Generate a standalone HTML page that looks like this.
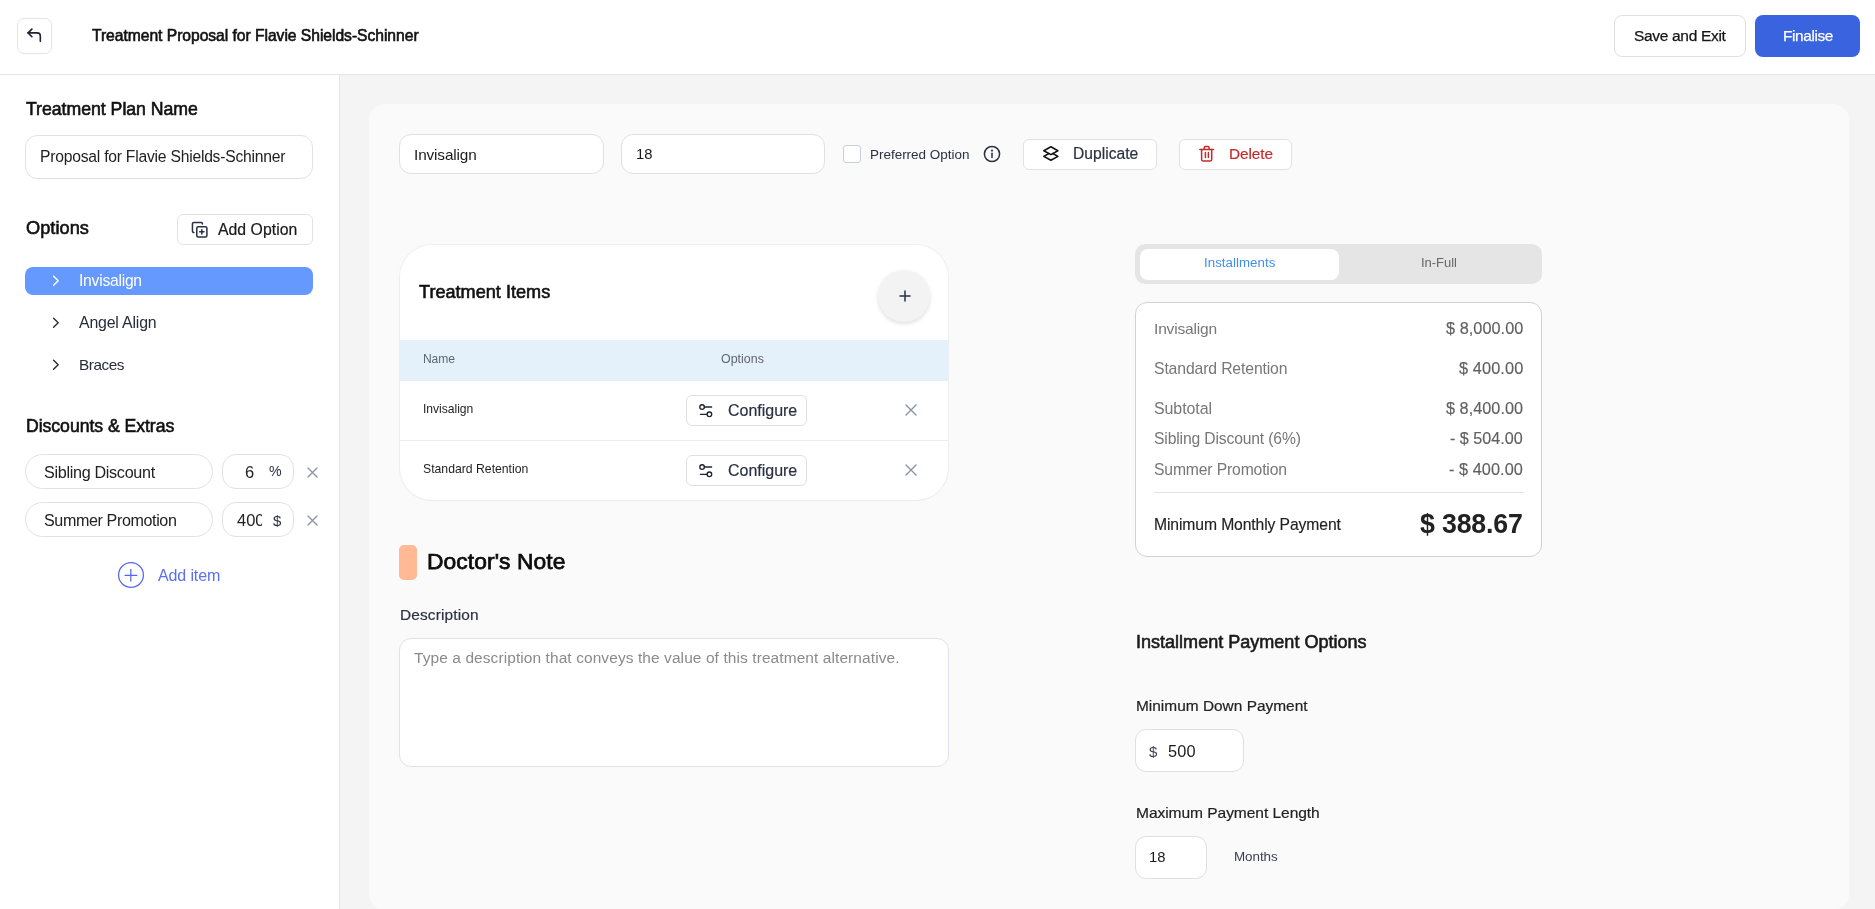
<!DOCTYPE html>
<html><head><meta charset="utf-8"><title>Treatment Proposal</title>
<style>
html,body{margin:0;padding:0;width:1875px;height:909px;overflow:hidden;background:#f4f4f4;}
body{position:relative;font-family:"Liberation Sans",sans-serif;}
.t{position:absolute;white-space:nowrap;will-change:transform;}
</style></head><body>
<div style="position:absolute;left:0px;top:0px;width:1875px;height:75px;box-sizing:border-box;background:#fff;border-bottom:1px solid #e5e5e5;"></div>
<div style="position:absolute;left:17px;top:18px;width:35px;height:36px;box-sizing:border-box;border:1px solid #e3e3e3;border-radius:7px;background:#fff;"></div>
<svg style="position:absolute;left:24.6px;top:26.4px" width="18.4" height="18.4" viewBox="0 0 24 24" fill="none" stroke="#1e2433" stroke-width="2.1" stroke-linecap="round" stroke-linejoin="round"><path d="M9 14 4 9l5-5"/><path d="M20 20v-7a4 4 0 0 0-4-4H4"/></svg>
<div class="t" style="left:91.70px;top:27.85px;font-size:15.66px;line-height:15.66px;letter-spacing:-0.039px;font-weight:normal;color:#111;-webkit-text-stroke:0.60px #111;">Treatment Proposal for Flavie Shields-Schinner</div>
<div style="position:absolute;left:1614px;top:15px;width:132px;height:42px;box-sizing:border-box;border:1px solid #e0e0e0;border-radius:8px;background:#fff;"></div>
<div class="t" style="left:1634.00px;top:28.08px;font-size:15.50px;line-height:15.50px;letter-spacing:-0.318px;font-weight:normal;color:#151515;-webkit-text-stroke:0.25px #151515;">Save and Exit</div>
<div style="position:absolute;left:1755px;top:15px;width:105px;height:42px;box-sizing:border-box;border-radius:8px;background:#3a63e0;"></div>
<div class="t" style="left:1782.60px;top:28.21px;font-size:15.35px;line-height:15.35px;letter-spacing:-0.354px;font-weight:normal;color:#fff;-webkit-text-stroke:0.25px #fff;">Finalise</div>
<div style="position:absolute;left:0px;top:75px;width:340px;height:834px;box-sizing:border-box;background:#fff;border-right:1px solid #e5e5e5;"></div>
<div class="t" style="left:25.80px;top:101.12px;font-size:17.70px;line-height:17.70px;letter-spacing:-0.025px;font-weight:normal;color:#111;-webkit-text-stroke:0.60px #111;">Treatment Plan Name</div>
<div style="position:absolute;left:25px;top:135px;width:288px;height:44px;box-sizing:border-box;border:1px solid #e2e2e2;border-radius:12px;background:#fff;"></div>
<div class="t" style="left:40.20px;top:149.03px;font-size:15.68px;line-height:15.68px;letter-spacing:-0.229px;font-weight:normal;color:#222;">Proposal for Flavie Shields-Schinner</div>
<div class="t" style="left:25.80px;top:218.89px;font-size:18.20px;line-height:18.20px;letter-spacing:0.046px;font-weight:normal;color:#111;-webkit-text-stroke:0.60px #111;">Options</div>
<div style="position:absolute;left:177px;top:214px;width:136px;height:31px;box-sizing:border-box;border:1px solid #e2e2e2;border-radius:6px;background:#fff;"></div>
<svg style="position:absolute;left:191px;top:221px" width="17.35" height="17.35" viewBox="0 0 24 24" fill="none" stroke="#2a3142" stroke-width="2.1" stroke-linecap="round" stroke-linejoin="round"><line x1="15" x2="15" y1="12" y2="18"/><line x1="12" x2="18" y1="15" y2="15"/><rect width="14" height="14" x="8" y="8" rx="2" ry="2"/><path d="M4 16c-1.1 0-2-.9-2-2V4c0-1.1.9-2 2-2h10c1.1 0 2 .9 2 2"/></svg>
<div class="t" style="left:218.40px;top:221.83px;font-size:15.79px;line-height:15.79px;letter-spacing:0.034px;font-weight:normal;color:#1a1a1a;-webkit-text-stroke:0.20px #1a1a1a;">Add Option</div>
<div style="position:absolute;left:25px;top:267px;width:288px;height:28px;box-sizing:border-box;background:#6699fe;border-radius:8px;"></div>
<svg style="position:absolute;left:49px;top:274px" width="14" height="14" viewBox="0 0 14 14" fill="none" stroke="#fff" stroke-width="1.4" stroke-linecap="round" stroke-linejoin="round"><path d="M4.6 2.3 9.2 6.8 4.6 11.3"/></svg>
<div class="t" style="left:78.70px;top:272.85px;font-size:15.65px;line-height:15.65px;letter-spacing:-0.239px;font-weight:normal;color:#fff;">Invisalign</div>
<svg style="position:absolute;left:49px;top:316px" width="14" height="14" viewBox="0 0 14 14" fill="none" stroke="#272c3b" stroke-width="1.4" stroke-linecap="round" stroke-linejoin="round"><path d="M4.6 2.3 9.2 6.8 4.6 11.3"/></svg>
<div class="t" style="left:78.70px;top:314.55px;font-size:15.89px;line-height:15.89px;letter-spacing:-0.180px;font-weight:normal;color:#272c3b;">Angel Align</div>
<svg style="position:absolute;left:49px;top:358px" width="14" height="14" viewBox="0 0 14 14" fill="none" stroke="#272c3b" stroke-width="1.4" stroke-linecap="round" stroke-linejoin="round"><path d="M4.6 2.3 9.2 6.8 4.6 11.3"/></svg>
<div class="t" style="left:78.70px;top:356.93px;font-size:15.32px;line-height:15.32px;letter-spacing:-0.457px;font-weight:normal;color:#272c3b;">Braces</div>
<div class="t" style="left:26.20px;top:417.56px;font-size:17.65px;line-height:17.65px;letter-spacing:-0.046px;font-weight:normal;color:#111;-webkit-text-stroke:0.60px #111;">Discounts & Extras</div>
<div style="position:absolute;left:25px;top:454px;width:188px;height:35px;box-sizing:border-box;border:1px solid #e2e2e2;border-radius:18px;background:#fff;"></div>
<div style="position:absolute;left:222px;top:454px;width:72px;height:35px;box-sizing:border-box;border:1px solid #e2e2e2;border-radius:14px;background:#fff;"></div>
<div class="t" style="left:44.40px;top:464.32px;font-size:16.17px;line-height:16.17px;letter-spacing:-0.314px;font-weight:normal;color:#222;">Sibling Discount</div>
<div style="position:absolute;left:232px;top:455px;width:29.5px;height:33px;overflow:hidden">
<div class="t" style="left:13.00px;top:9.03px;font-size:16.50px;line-height:16.50px;letter-spacing:0.000px;font-weight:normal;color:#222;">6</div>
</div>
<div class="t" style="left:268.90px;top:464.48px;font-size:14.20px;line-height:14.20px;letter-spacing:0.000px;font-weight:normal;color:#2a3142;">%</div>
<svg style="position:absolute;left:305.5px;top:465.7px" width="13" height="13" viewBox="0 0 13 13" fill="none" stroke="#8a93a3" stroke-width="1.25" stroke-linecap="round"><path d="M2 2 11 11M11 2 2 11"/></svg>
<div style="position:absolute;left:25px;top:502px;width:188px;height:35px;box-sizing:border-box;border:1px solid #e2e2e2;border-radius:18px;background:#fff;"></div>
<div style="position:absolute;left:222px;top:502px;width:72px;height:35px;box-sizing:border-box;border:1px solid #e2e2e2;border-radius:14px;background:#fff;"></div>
<div class="t" style="left:44.40px;top:512.35px;font-size:16.12px;line-height:16.12px;letter-spacing:-0.393px;font-weight:normal;color:#222;">Summer Promotion</div>
<div style="position:absolute;left:232px;top:503px;width:29.5px;height:33px;overflow:hidden">
<div class="t" style="left:4.70px;top:9.03px;font-size:16.50px;line-height:16.50px;letter-spacing:0.000px;font-weight:normal;color:#222;">400</div>
</div>
<div class="t" style="left:272.50px;top:512.80px;font-size:15.00px;line-height:15.00px;letter-spacing:0.000px;font-weight:normal;color:#2a3142;">$</div>
<svg style="position:absolute;left:305.5px;top:513.7px" width="13" height="13" viewBox="0 0 13 13" fill="none" stroke="#8a93a3" stroke-width="1.25" stroke-linecap="round"><path d="M2 2 11 11M11 2 2 11"/></svg>
<svg style="position:absolute;left:117px;top:560.5px" width="28" height="28" viewBox="0 0 28 28" fill="none" stroke="#5566f0" stroke-width="1.25" stroke-linecap="round"><circle cx="14" cy="14" r="12.4"/><path d="M13.8 8.3v11.8M8 14.3h11.8"/></svg>
<div class="t" style="left:157.70px;top:566.92px;font-size:16.04px;line-height:16.04px;letter-spacing:-0.143px;font-weight:normal;color:#5b6ef5;">Add item</div>
<div style="position:absolute;left:340px;top:75px;width:1535px;height:834px;box-sizing:border-box;background:#f4f4f4;"></div>
<div style="position:absolute;left:369px;top:104px;width:1480px;height:806px;box-sizing:border-box;background:#fafafa;border-radius:16px;"></div>
<div style="position:absolute;left:399px;top:134px;width:205px;height:40px;box-sizing:border-box;border:1px solid #e0e0e0;border-radius:12px;background:#fff;"></div>
<div class="t" style="left:414.30px;top:147.03px;font-size:15.32px;line-height:15.32px;letter-spacing:-0.117px;font-weight:normal;color:#1a1a1a;">Invisalign</div>
<div style="position:absolute;left:621px;top:134px;width:204px;height:40px;box-sizing:border-box;border:1px solid #e0e0e0;border-radius:12px;background:#fff;"></div>
<div class="t" style="left:635.60px;top:147.47px;font-size:14.80px;line-height:14.80px;letter-spacing:0.000px;font-weight:normal;color:#1a1a1a;">18</div>
<div style="position:absolute;left:843px;top:145px;width:18px;height:18px;box-sizing:border-box;border:1px solid #c9ced9;border-radius:3px;background:#fff;"></div>
<div class="t" style="left:870.40px;top:147.59px;font-size:13.48px;line-height:13.48px;letter-spacing:-0.012px;font-weight:normal;color:#2a3142;">Preferred Option</div>
<svg style="position:absolute;left:982.8px;top:144.7px" width="18" height="18" viewBox="0 0 18 18" fill="none" stroke="#2a3142" stroke-width="1.5" stroke-linecap="round"><circle cx="9" cy="9" r="7.6"/><path d="M9 8.2v4.2"/><circle cx="9" cy="5.6" r="0.4" fill="#2a3142"/></svg>
<div style="position:absolute;left:1023px;top:139px;width:134px;height:31px;box-sizing:border-box;border:1px solid #e2e2e2;border-radius:6px;background:#fff;"></div>
<svg style="position:absolute;left:1038px;top:141px" width="26" height="26" viewBox="0 0 26 26" fill="none" stroke="#111" stroke-width="1.55" stroke-linecap="round" stroke-linejoin="round"><path d="M12.9 5.8 19.9 9.7 12.9 13.6 5.8 9.7z"/><path d="M11 12.55 5.8 15.4 12.9 19.3 19.9 15.4 14.8 12.55"/></svg>
<div class="t" style="left:1072.80px;top:145.68px;font-size:15.62px;line-height:15.62px;letter-spacing:0.023px;font-weight:normal;color:#2a3142;-webkit-text-stroke:0.20px #2a3142;">Duplicate</div>
<div style="position:absolute;left:1179px;top:139px;width:113px;height:31px;box-sizing:border-box;border:1px solid #e2e2e2;border-radius:6px;background:#fff;"></div>
<svg style="position:absolute;left:1193px;top:141px" width="26" height="26" viewBox="0 0 26 26" fill="none" stroke="#c42b2b" stroke-width="1.5" stroke-linecap="round" stroke-linejoin="round"><path d="M6.8 8.4H20.5"/><path d="M8.6 8.4V18.6Q8.6 20 10 20H17.3Q18.7 20 18.7 18.6V8.4"/><path d="M10.9 8.4 11.5 5.9Q11.8 5.4 12.3 5.4H15Q15.5 5.4 15.8 5.9L16.4 8.4"/><path d="M12.4 11.6V16.6M15.4 11.6V16.6"/></svg>
<div class="t" style="left:1229.30px;top:145.89px;font-size:15.37px;line-height:15.37px;letter-spacing:-0.069px;font-weight:normal;color:#c42b2b;-webkit-text-stroke:0.20px #c42b2b;">Delete</div>
<div style="position:absolute;left:400px;top:245px;width:548px;height:255px;box-sizing:border-box;background:#fff;border-radius:32px;box-shadow:0 0 0 1px rgba(228,231,236,0.6),0 1px 2px rgba(0,0,0,0.03);overflow:hidden;"></div>
<div class="t" style="left:418.60px;top:282.81px;font-size:18.07px;line-height:18.07px;letter-spacing:0.024px;font-weight:normal;color:#111;-webkit-text-stroke:0.60px #111;">Treatment Items</div>
<div style="position:absolute;left:878.4px;top:270px;width:52.0px;height:52px;box-sizing:border-box;background:#f3f3f3;border-radius:50%;box-shadow:0 2px 4px rgba(0,0,0,0.12);"></div>
<svg style="position:absolute;left:896.85px;top:287.9px" width="16" height="16" viewBox="0 0 16 16" fill="none" stroke="#2a3142" stroke-width="1.5" stroke-linecap="round"><path d="M8 3v10M3 8h10"/></svg>
<div style="position:absolute;left:400px;top:340px;width:548px;height:41px;box-sizing:border-box;background:#e4f1fb;"></div>
<div class="t" style="left:422.90px;top:352.54px;font-size:12.12px;line-height:12.12px;letter-spacing:-0.142px;font-weight:normal;color:#5f6673;">Name</div>
<div class="t" style="left:721.30px;top:352.59px;font-size:12.41px;line-height:12.41px;letter-spacing:0.022px;font-weight:normal;color:#5f6673;">Options</div>
<div style="position:absolute;left:400px;top:440px;width:548px;height:1px;box-sizing:border-box;background:#ececec;"></div>
<div class="t" style="left:422.80px;top:402.54px;font-size:12.12px;line-height:12.12px;letter-spacing:-0.027px;font-weight:normal;color:#1e1e1e;">Invisalign</div>
<div style="position:absolute;left:686px;top:395px;width:121px;height:31px;box-sizing:border-box;border:1px solid #e0e0e0;border-radius:6px;background:#fff;"></div>
<svg style="position:absolute;left:692px;top:398px" width="28" height="26" viewBox="0 0 28 26" fill="none" stroke="#1e2433" stroke-width="1.35" stroke-linecap="round"><path d="M12.4 9H19.6M8.4 16.3H15.1"/><circle cx="10.1" cy="9" r="2.3"/><circle cx="17.4" cy="16.3" r="2.3"/></svg>
<div class="t" style="left:727.60px;top:402.67px;font-size:15.98px;line-height:15.98px;letter-spacing:-0.001px;font-weight:normal;color:#2a3142;-webkit-text-stroke:0.20px #2a3142;">Configure</div>
<svg style="position:absolute;left:904.7px;top:404.2px" width="12" height="12" viewBox="0 0 12 12" fill="none" stroke="#8a93a3" stroke-width="1.4" stroke-linecap="round"><path d="M1 1 11 11M11 1 1 11"/></svg>
<div class="t" style="left:422.80px;top:462.56px;font-size:12.22px;line-height:12.22px;letter-spacing:0.002px;font-weight:normal;color:#1e1e1e;">Standard Retention</div>
<div style="position:absolute;left:686px;top:455px;width:121px;height:31px;box-sizing:border-box;border:1px solid #e0e0e0;border-radius:6px;background:#fff;"></div>
<svg style="position:absolute;left:692px;top:458px" width="28" height="26" viewBox="0 0 28 26" fill="none" stroke="#1e2433" stroke-width="1.35" stroke-linecap="round"><path d="M12.4 9H19.6M8.4 16.3H15.1"/><circle cx="10.1" cy="9" r="2.3"/><circle cx="17.4" cy="16.3" r="2.3"/></svg>
<div class="t" style="left:727.60px;top:462.67px;font-size:15.98px;line-height:15.98px;letter-spacing:-0.001px;font-weight:normal;color:#2a3142;-webkit-text-stroke:0.20px #2a3142;">Configure</div>
<svg style="position:absolute;left:904.7px;top:464.2px" width="12" height="12" viewBox="0 0 12 12" fill="none" stroke="#8a93a3" stroke-width="1.4" stroke-linecap="round"><path d="M1 1 11 11M11 1 1 11"/></svg>
<div style="position:absolute;left:399px;top:545px;width:18px;height:35px;box-sizing:border-box;background:#ffb994;border-radius:5px;"></div>
<div class="t" style="left:426.70px;top:550.48px;font-size:22.82px;line-height:22.82px;letter-spacing:0.073px;font-weight:normal;color:#0d0d0d;-webkit-text-stroke:0.75px #0d0d0d;">Doctor's Note</div>
<div class="t" style="left:400.40px;top:606.95px;font-size:15.42px;line-height:15.42px;letter-spacing:0.149px;font-weight:normal;color:#2a3142;-webkit-text-stroke:0.20px #2a3142;">Description</div>
<div style="position:absolute;left:399px;top:638px;width:550px;height:129px;box-sizing:border-box;border:1px solid #dfe2ea;border-radius:12px;background:#fff;"></div>
<div class="t" style="left:413.90px;top:649.62px;font-size:15.46px;line-height:15.46px;letter-spacing:0.099px;font-weight:normal;color:#8a8a8a;">Type a description that conveys the value of this treatment alternative.</div>
<div style="position:absolute;left:1135px;top:244px;width:407px;height:40px;box-sizing:border-box;background:#e5e5e5;border-radius:10px;"></div>
<div style="position:absolute;left:1140px;top:249px;width:199px;height:31px;box-sizing:border-box;background:#fff;border-radius:8px;"></div>
<div class="t" style="left:1203.70px;top:255.78px;font-size:13.25px;line-height:13.25px;letter-spacing:0.055px;font-weight:normal;color:#3d8ef0;">Installments</div>
<div class="t" style="left:1420.50px;top:256.01px;font-size:12.99px;line-height:12.99px;letter-spacing:-0.029px;font-weight:normal;color:#666;">In-Full</div>
<div style="position:absolute;left:1135px;top:302px;width:407px;height:255px;box-sizing:border-box;border:1px solid #d2d2d2;border-radius:12px;background:#fff;"></div>
<div class="t" style="left:1154.30px;top:320.83px;font-size:15.56px;line-height:15.56px;letter-spacing:-0.176px;font-weight:normal;color:#777;">Invisalign</div>
<div class="t" style="left:1445.60px;top:320.23px;font-size:16.27px;line-height:16.27px;letter-spacing:0.046px;font-weight:normal;color:#606060;-webkit-text-stroke:0.15px #606060;">$ 8,000.00</div>
<div class="t" style="left:1154.30px;top:360.87px;font-size:15.75px;line-height:15.75px;letter-spacing:-0.130px;font-weight:normal;color:#777;">Standard Retention</div>
<div class="t" style="left:1458.60px;top:360.35px;font-size:16.36px;line-height:16.36px;letter-spacing:0.085px;font-weight:normal;color:#606060;-webkit-text-stroke:0.15px #606060;">$ 400.00</div>
<div class="t" style="left:1154.30px;top:400.61px;font-size:15.94px;line-height:15.94px;letter-spacing:-0.068px;font-weight:normal;color:#777;">Subtotal</div>
<div class="t" style="left:1445.80px;top:400.35px;font-size:16.24px;line-height:16.24px;letter-spacing:0.037px;font-weight:normal;color:#606060;-webkit-text-stroke:0.15px #606060;">$ 8,400.00</div>
<div class="t" style="left:1154.30px;top:430.63px;font-size:15.68px;line-height:15.68px;letter-spacing:-0.145px;font-weight:normal;color:#777;">Sibling Discount (6%)</div>
<div class="t" style="left:1450.10px;top:430.23px;font-size:16.15px;line-height:16.15px;letter-spacing:0.007px;font-weight:normal;color:#606060;-webkit-text-stroke:0.15px #606060;">- $ 504.00</div>
<div class="t" style="left:1154.30px;top:461.80px;font-size:15.72px;line-height:15.72px;letter-spacing:-0.159px;font-weight:normal;color:#777;">Summer Promotion</div>
<div class="t" style="left:1449.00px;top:461.30px;font-size:16.30px;line-height:16.30px;letter-spacing:0.056px;font-weight:normal;color:#606060;-webkit-text-stroke:0.15px #606060;">- $ 400.00</div>
<div style="position:absolute;left:1154px;top:492px;width:370px;height:1px;box-sizing:border-box;background:#e2e2e2;"></div>
<div class="t" style="left:1154.20px;top:517.01px;font-size:15.70px;line-height:15.70px;letter-spacing:-0.104px;font-weight:normal;color:#222;-webkit-text-stroke:0.15px #222;">Minimum Monthly Payment</div>
<div class="t" style="left:1420.20px;top:511.38px;font-size:26.72px;line-height:26.72px;letter-spacing:-0.172px;font-weight:bold;color:#222;">$ 388.67</div>
<div class="t" style="left:1136.40px;top:632.92px;font-size:18.05px;line-height:18.05px;letter-spacing:0.003px;font-weight:normal;color:#1a1a1a;-webkit-text-stroke:0.60px #1a1a1a;">Installment Payment Options</div>
<div class="t" style="left:1136.40px;top:698.14px;font-size:15.43px;line-height:15.43px;letter-spacing:0.008px;font-weight:normal;color:#222;-webkit-text-stroke:0.20px #222;">Minimum Down Payment</div>
<div style="position:absolute;left:1135px;top:729px;width:109px;height:43px;box-sizing:border-box;border:1px solid #e0e0e0;border-radius:11px;background:#fff;"></div>
<div class="t" style="left:1149.10px;top:744.30px;font-size:15.00px;line-height:15.00px;letter-spacing:0.000px;font-weight:normal;color:#3a4256;">$</div>
<div class="t" style="left:1167.80px;top:743.18px;font-size:16.32px;line-height:16.32px;letter-spacing:0.186px;font-weight:normal;color:#1a1a1a;">500</div>
<div class="t" style="left:1136.10px;top:804.94px;font-size:15.55px;line-height:15.55px;letter-spacing:-0.057px;font-weight:normal;color:#222;-webkit-text-stroke:0.20px #222;">Maximum Payment Length</div>
<div style="position:absolute;left:1135px;top:836px;width:72px;height:43px;box-sizing:border-box;border:1px solid #e0e0e0;border-radius:11px;background:#fff;"></div>
<div class="t" style="left:1149.30px;top:850.27px;font-size:14.80px;line-height:14.80px;letter-spacing:0.000px;font-weight:normal;color:#1a1a1a;">18</div>
<div class="t" style="left:1233.80px;top:849.65px;font-size:13.40px;line-height:13.40px;letter-spacing:-0.050px;font-weight:normal;color:#3a4256;">Months</div>
</body></html>
